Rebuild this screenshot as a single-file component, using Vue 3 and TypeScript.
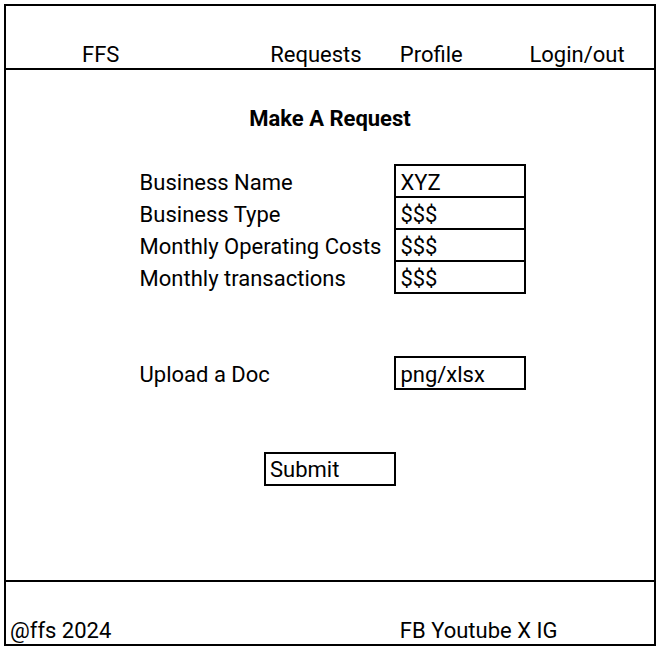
<script setup lang="ts">
import { reactive } from 'vue'

interface Field {
  id: string
  label: string
}

const fields: Field[] = [
  { id: 'name', label: 'Business Name' },
  { id: 'type', label: 'Business Type' },
  { id: 'costs', label: 'Monthly Operating Costs' },
  { id: 'transactions', label: 'Monthly transactions' },
]

const values = reactive<Record<string, string>>({
  name: 'XYZ',
  type: '$$$',
  costs: '$$$',
  transactions: '$$$',
  doc: 'png/xlsx',
})
</script>

<template>
  <div class="page">
    <header class="header">
      <a class="brand" href="#">FFS</a>
      <nav class="nav">
        <a href="#">Requests</a>
        <a href="#">Profile</a>
        <a href="#">Login/out</a>
      </nav>
    </header>

    <main class="main">
      <h1>Make A Request</h1>
      <form class="form" @submit.prevent>
        <div class="fields">
          <div v-for="field in fields" :key="field.id" class="row">
            <label :for="field.id">{{ field.label }}</label>
            <input :id="field.id" v-model="values[field.id]" type="text" />
          </div>
        </div>
        <div class="row">
          <label for="doc">Upload a Doc</label>
          <input id="doc" v-model="values.doc" type="text" />
        </div>
        <button type="submit">Submit</button>
      </form>
    </main>

    <footer class="footer">
      <span>@ffs 2024</span>
      <span class="social"><a href="#">FB</a> <a href="#">Youtube</a> <a href="#">X</a> <a href="#">IG</a></span>
    </footer>
  </div>
</template>

<style>
body {
  background: #fff;
}
</style>

<style scoped>
.page,
.page * {
  box-sizing: border-box;
}

.page {
  display: flex;
  flex-direction: column;
  min-height: calc(100vh - 10px);
  margin: 4px 2px 6px 4px;
  border: 2px solid #000;
  color: #000;
  font: 22px/26px Roboto, "Noto Sans", sans-serif;
}

a {
  color: inherit;
  text-decoration: none;
}

.header,
.footer {
  display: grid;
  grid-template-columns: repeat(5, 1fr);
  align-items: end;
  height: 64px;
}

.header {
  border-bottom: 2px solid #000;
}

.brand {
  grid-column: 1 / 3;
  padding-left: 76px;
}

.nav {
  display: grid;
  grid-template-columns: repeat(3, 1fr);
  grid-column: 3 / 6;
}

.nav a {
  padding-left: 5px;
}

.main {
  flex: 1;
}

h1 {
  margin: 36px 0 0;
  font-size: 22px;
  line-height: 26px;
  text-align: center;
}

.form {
  display: flex;
  flex-direction: column;
  gap: 62px;
  width: calc(60% + 4px);
  margin: 32px auto 0;
}

.row {
  display: grid;
  grid-template-columns: 1fr 132px;
}

.row + .row {
  margin-top: -2px;
}

label {
  padding: 6px 6px 2px;
  white-space: nowrap;
}

input,
button {
  width: 100%;
  min-width: 0;
  height: 34px;
  margin: 0;
  padding: 2px 4px 0;
  border: 2px solid #000;
  border-radius: 0;
  background: #fff;
  color: inherit;
  font: inherit;
  text-align: left;
}

button {
  align-self: center;
  width: 132px;
}

.footer {
  border-top: 2px solid #000;
}

.footer span {
  padding-left: 4px;
}

.footer .social {
  grid-column: 4 / 6;
  padding-left: 5px;
}
</style>
